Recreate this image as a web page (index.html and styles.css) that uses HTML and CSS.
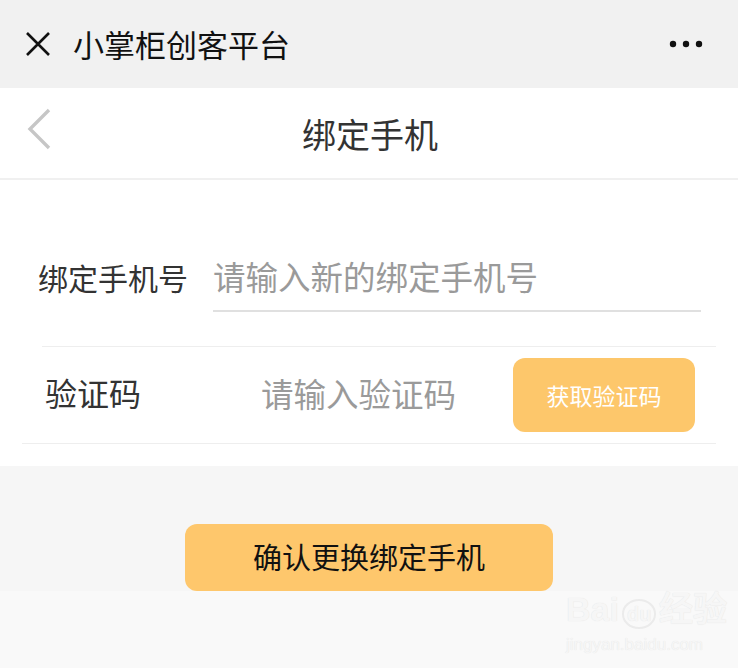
FILE: index.html
```html
<!DOCTYPE html>
<html lang="zh-CN">
<head>
  <meta charset="UTF-8" />
  <meta name="viewport" content="width=device-width, initial-scale=1" />
  <title>小掌柜创客平台</title>
  <link rel="stylesheet" href="styles.css">
</head>
<body>

<!-- 顶部栏 -->
<div class="topbar">
  <svg class="close-icon" width="26" height="26" viewBox="0 0 26 26">
    <path d="M2 2 L24 24 M24 2 L2 24" stroke="#111" stroke-width="2.6" fill="none" />
  </svg>
  <span class="app-title">小掌柜创客平台</span>
  <svg class="more-icon" width="34" height="8" viewBox="0 0 34 8">
    <circle cx="4" cy="4" r="3.2" fill="#111" />
    <circle cx="17" cy="4" r="3.2" fill="#111" />
    <circle cx="30" cy="4" r="3.2" fill="#111" />
  </svg>
</div>

<!-- 页面标题 -->
<div class="header">
  <svg class="back-icon" width="26" height="42" viewBox="0 0 26 42">
    <path d="M23 2 L4 21 L23 40" stroke="#c6c6c6" stroke-width="3.4" fill="none" />
  </svg>
  <h2>绑定手机</h2>
</div>

<!-- 表单 -->
<div class="form">
  <div class="phone-row">
    <label>绑定手机号</label>
    <div class="phone-input">请输入新的绑定手机号</div>
  </div>
  <div class="divider"></div>
  <div class="code-row">
    <label>验证码</label>
    <div class="code-input">请输入验证码</div>
    <button class="code-btn">获取验证码</button>
  </div>
</div>

<div class="actions">
  <button class="confirm-btn">确认更换绑定手机</button>
</div>

<div class="bottom"></div>

<div class="watermark">
  <div class="wm-logo">Bai<span class="wm-du">du</span>经验</div>
  <div class="wm-url">jingyan.baidu.com</div>
</div>

</body>
</html>
```

FILE: styles.css
```css
* { box-sizing: border-box; }
body {
  font-family: "Noto Sans CJK SC", "Noto Sans", sans-serif;
  margin: 0;
  background: #f9f9f9;
  width: 738px;
  height: 668px;
  position: relative;
  overflow: hidden;
}
.topbar {
  height: 88px;
  background: #f1f1f1;
  display: flex;
  align-items: center;
  padding: 0 35px 0 25px;
}
.app-title {
  font-size: 31px;
  color: #111;
  margin-left: 22px;
  flex: 1;
  margin-top: -2px;
}
.header {
  height: 92px;
  background: #fff;
  border-bottom: 2px solid #f0f0f0;
  display: flex;
  align-items: center;
  justify-content: center;
  position: relative;
}
.back-icon {
  position: absolute;
  left: 26px;
  top: 20px;
}
h2 {
  margin: 0 0 0 2px;
  font-size: 34px;
  font-weight: normal;
  color: #333;
}
.form {
  background: #fff;
  padding-top: 66px;
  height: 286px;
}
.phone-row {
  display: flex;
  align-items: center;
  padding-left: 38px;
  height: 66px;
}
.phone-row label {
  font-size: 30px;
  color: #333;
  width: 175px;
  margin-top: -4px;
}
.phone-input {
  width: 488px;
  height: 66px;
  line-height: 60px;
  font-size: 32.5px;
  color: #9a9a9a;
  border-bottom: 2px solid #e0e0e0;
}
.divider {
  margin: 34px 22px 0 42px;
  border-top: 1px solid #eeeeee;
}
.code-row {
  display: flex;
  align-items: center;
  margin: 0 22px;
  padding-left: 23px;
  height: 97px;
  border-bottom: 1px solid #eeeeee;
}
.code-row label {
  font-size: 32px;
  color: #333;
  width: 216px;
  margin-top: -6px;
}
.code-input {
  flex: 1;
  font-size: 32.5px;
  color: #9a9a9a;
  margin-top: -6px;
}
.code-btn {
  width: 182px;
  height: 74px;
  margin-right: 21px;
  border: none;
  border-radius: 12px;
  background: #fdc76b;
  color: #fff;
  font-family: inherit;
  font-size: 23px;
}
.actions {
  background: #f6f6f6;
  padding-top: 58px;
  display: flex;
  justify-content: center;
}
.confirm-btn {
  width: 368px;
  height: 67px;
  border: none;
  border-radius: 12px;
  background: #fec76c;
  color: #111;
  font-family: inherit;
  font-size: 29px;
  padding-bottom: 4px;
}
.watermark {
  position: absolute;
  left: 566px;
  top: 590px;
  color: #f6f6f6;
  text-shadow: 0 0 1px #e0e0e0;
  font-family: "Liberation Sans", sans-serif;
}
.wm-logo {
  font-size: 34px;
  font-weight: bold;
  line-height: 38px;
}
.wm-du {
  font-size: 20px;
  border: 2px solid #ebebeb;
  border-radius: 50%;
  padding: 2px 3px;
  margin: 0 3px;
}
.wm-url {
  font-size: 17px;
  line-height: 24px;
}
```
